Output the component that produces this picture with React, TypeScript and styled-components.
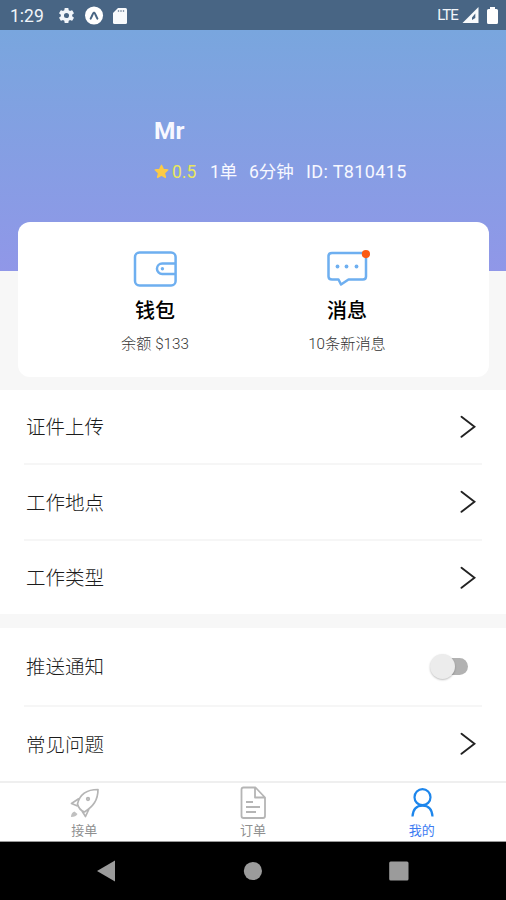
import React from 'react';
import styled, { createGlobalStyle } from 'styled-components';

const GlobalStyle = createGlobalStyle`
  * { box-sizing: border-box; }
  body {
    margin: 0;
    background: #f7f7f7;
    font-family: Roboto, "Noto Sans CJK SC", sans-serif;
    color: #1c1c1c;
  }
  svg { display: block; flex: none; }
`;

const Screen = styled.div`
  width: 506px;
  height: 900px;
  display: flex;
  flex-direction: column;
  overflow: hidden;
  background: #f7f7f7;
`;

const StatusBar = styled.header`
  flex: none;
  height: 30px;
  display: flex;
  align-items: center;
  justify-content: space-between;
  padding: 1px 8px 0 10px;
  background: #486584;
  color: #f1f5fa;
`;

const StatusGroup = styled.div<{ $gap: number }>`
  display: flex;
  align-items: center;
  gap: ${(p) => p.$gap}px;
`;

const Clock = styled.span`
  font-size: 17.5px;
  line-height: 20px;
  width: 38px;
`;

const Network = styled.span`
  font-size: 15px;
  line-height: 19px;
  padding-bottom: 1px;
  letter-spacing: -0.9px;
`;

const Hero = styled.section`
  flex: none;
  height: 241px;
  padding: 87px 0 0 154px;
  background: linear-gradient(#79a6de, #9097e8);
  color: #f7f8ff;
`;

const Name = styled.h1`
  margin: 0;
  font-size: 24.5px;
  line-height: 28px;
  font-weight: 700;
`;

const Stats = styled.div`
  display: flex;
  align-items: center;
  margin-top: 14px;
  height: 26px;
  font-size: 17.5px;
  line-height: 26px;
  white-space: nowrap;
`;

const Stat = styled.span<{ $width: number }>`
  width: ${(p) => p.$width}px;
`;

const DriverId = styled.span`
  font-size: 18px;
  letter-spacing: 0.38px;
`;

const Rating = styled.span`
  display: flex;
  align-items: center;
  gap: 3px;
  width: 56px;
  color: #e9e75c;
  svg { margin-bottom: 2px; }
`;

const Card = styled.section`
  flex: none;
  position: relative;
  display: flex;
  height: 155px;
  margin: -49px 17px 13px 18px;
  padding: 28px 41px 0;
  border-radius: 12px;
  background: #fff;
`;

const CardItem = styled.div`
  width: 192px;
  display: flex;
  flex-direction: column;
  align-items: center;
`;

const CardTitle = styled.div`
  margin-top: 9px;
  font-size: 20px;
  line-height: 28px;
  font-weight: 500;
  color: #000;
`;

const CardNote = styled.div`
  margin-top: 8px;
  font-size: 15.2px;
  line-height: 22px;
  font-weight: 300;
  color: #333;
`;

const List = styled.section<{ $height: number }>`
  flex: none;
  display: flex;
  flex-direction: column;
  height: ${(p) => p.$height}px;
  padding: 0 24px;
  background: #fff;
`;

const Row = styled.div<{ $height: number; $divider?: boolean }>`
  flex: none;
  display: flex;
  align-items: center;
  justify-content: space-between;
  height: ${(p) => p.$height}px;
  padding: 0 6px 0 2px;
  border-bottom: ${(p) => (p.$divider ? '2px solid #f6f6f6' : 'none')};
`;

const RowLabel = styled.span`
  padding-top: 3px;
  font-size: 19.5px;
  line-height: 28px;
  font-weight: 300;
`;

const Gap = styled.div`
  flex: none;
  height: 14px;
`;

const Track = styled.span`
  display: flex;
  align-items: center;
  width: 31px;
  height: 17px;
  margin-right: 8px;
  border-radius: 9px;
  background: #b2b2b2;
`;

const Thumb = styled.span`
  flex: none;
  width: 25px;
  height: 25px;
  margin-left: -7px;
  border-radius: 50%;
  background: #ececec;
  box-shadow: 0 1px 2px rgba(0, 0, 0, 0.25);
`;

const TabBar = styled.nav`
  flex: none;
  display: flex;
  height: 61px;
  border-top: 2px solid #efefef;
  border-bottom: 1px solid #999;
  background: #fff;
`;

const Tab = styled.div<{ $active?: boolean }>`
  flex: 1;
  display: flex;
  flex-direction: column;
  align-items: center;
  padding-top: 3px;
  color: ${(p) => (p.$active ? '#3d7cf2' : '#8f8f8f')};
  font-size: 13px;
  line-height: 18px;
  svg { margin-bottom: 2px; }
`;

const NavBar = styled.footer`
  flex: none;
  height: 58px;
  display: flex;
  justify-content: space-between;
  align-items: center;
  padding: 0 96px 0 97px;
  background: #000;
`;

const Gear = () => (
  <svg width="19" height="19" viewBox="0 0 24 24" fill="currentColor">
    <path d="M19.14 12.94c.04-.3.06-.61.06-.94s-.02-.64-.07-.94l2.03-1.58a.49.49 0 0 0 .12-.61l-1.92-3.32a.49.49 0 0 0-.59-.22l-2.39.96a7 7 0 0 0-1.62-.94l-.36-2.54a.48.48 0 0 0-.48-.41h-3.84a.48.48 0 0 0-.47.41l-.36 2.54c-.59.24-1.13.57-1.62.94l-2.39-.96a.48.48 0 0 0-.59.22L2.74 8.87a.48.48 0 0 0 .12.61l2.03 1.58a7.4 7.4 0 0 0 0 1.88l-2.03 1.58a.49.49 0 0 0-.12.61l1.92 3.32c.12.22.37.29.59.22l2.39-.96c.5.38 1.03.7 1.62.94l.36 2.54c.05.24.24.41.48.41h3.84c.24 0 .44-.17.47-.41l.36-2.54a7 7 0 0 0 1.62-.94l2.39.96c.22.08.47 0 .59-.22l1.92-3.32a.49.49 0 0 0-.12-.61zM12 15.2a3.2 3.2 0 1 1 0-6.4 3.2 3.2 0 0 1 0 6.4z" />
  </svg>
);

const ExpoBadge = () => (
  <svg width="19" height="19" viewBox="0 0 20 20">
    <circle cx="9.500" cy="10" r="9.500" fill="#fff" />
    <path d="M6 13.200C7.400 11 8.300 7 9.500 7s2.100 4 3.500 6.200" fill="none" stroke="#486584" strokeWidth="2.200" strokeLinecap="round" />
  </svg>
);

const SdCard = () => (
  <svg width="14" height="16" viewBox="0 0 14 16">
    <path d="M5 0h7.500Q14 0 14 1.500v13q0 1.500-1.500 1.500h-11Q0 16 0 14.500V5z" fill="#f8fafc" />
    <path d="M5.500 2v2M8 2v2M10.500 2v2" stroke="#8c9cad" strokeWidth="1.300" />
  </svg>
);

const Signal = () => (
  <svg width="17" height="17" viewBox="0 0 17 17">
    <path d="M16.500 0v16H.500z" fill="#f8fafc" />
    <path d="M13.300 6.500v4.500L10 13v-2.500z" fill="#486584" />
  </svg>
);

const Battery = () => (
  <svg width="11" height="17" viewBox="0 0 11 17">
    <path d="M3 0h5v2h1.500Q11 2 11 3.500v12q0 1.500-1.500 1.500h-8Q0 17 0 15.500v-12Q0 2 1.500 2H3z" fill="#fff" />
  </svg>
);

const Star = () => (
  <svg width="15" height="15" viewBox="0 0 24 24" fill="#fdcb45" stroke="#fdcb45" strokeWidth="2" strokeLinejoin="round">
    <path d="m12 2 3 6.600 7.200.8-5.400 4.900 1.500 7.200L12 17.900l-6.300 3.600 1.500-7.200L1.800 9.400 9 8.600z" />
  </svg>
);

const Wallet = () => (
  <svg width="44" height="38" viewBox="-0.700 0 44 38" fill="none" stroke="#6eaff0" strokeWidth="2.500">
    <rect x="1.300" y="2.500" width="40.600" height="33" rx="4.500" />
    <path d="M41.800 13.500H28.500a5.250 5.250 0 0 0 0 10.500h13.300" />
    <circle cx="28.700" cy="18.700" r="1.700" fill="#6eaff0" stroke="none" />
  </svg>
);

const Message = () => (
  <svg width="46" height="38" viewBox="-2 0 46 38">
    <path d="M6 3h31q3 0 3 3v20.500q0 3-3 3H22.500L15 34.500l-2.500-5H6q-3.500 0-3.500-3V6Q2.500 3 6 3z" fill="none" stroke="#6eaff0" strokeWidth="2.500" strokeLinejoin="round" />
    <g fill="#6eaff0">
      <circle cx="11.500" cy="16.500" r="1.900" />
      <circle cx="20.500" cy="16.500" r="1.900" />
      <circle cx="30.500" cy="16.500" r="1.900" />
    </g>
    <circle cx="39.900" cy="4.100" r="4.100" fill="#fb5b14" />
  </svg>
);

const Chevron = () => (
  <svg width="18" height="24" viewBox="0 0 18 24" fill="none" stroke="#222" strokeWidth="1.900" strokeLinecap="round">
    <path d="m3.500 1.800 13 10-13 10" />
  </svg>
);

const Rocket = () => (
  <svg width="32" height="34" viewBox="0 0 32 34" fill="none" stroke="#b5b5b5" strokeWidth="1.700" strokeLinejoin="round">
    <path d="M9.500 18C11.500 9 18 3.500 30 3.500 30 14.500 25 20.500 16.500 26q-5.500-2-7-8zM11 12.500 3.500 17.500l6 2.500M14 25l3.500 5.500L21 23" />
    <circle cx="20" cy="13" r="1.300" />
    <path d="M6.500 25.500q-3.500 1-3.500 5.500 5 0 6.500-3z" fill="#c0c0c0" stroke="none" />
  </svg>
);

const Document = () => (
  <svg width="32" height="34" viewBox="0 0 32 34" fill="none" stroke="#b5b5b5" strokeWidth="1.800" strokeLinejoin="round">
    <path d="M6.500 1.500h12L28 11.500V30q0 2-2 2H6.500q-2 0-2-2V3.500q0-2 2-2zM18 1.500v10h10M9 16h7M9 21h14M9 26h10" />
  </svg>
);

const Person = () => (
  <svg width="32" height="34" viewBox="0 0 32 34" fill="none" stroke="#1d86ec" strokeWidth="2.200">
    <circle cx="16.500" cy="11.200" r="8" />
    <path d="M6.500 30.500C7 23 11 19.700 16.500 19.700S26 23 26.500 30.500" />
  </svg>
);

const BackKey = () => (
  <svg width="19" height="22" viewBox="0 0 19 22">
    <path d="M18 .5v21L0 11z" fill="#9b9b9b" />
  </svg>
);

const HomeKey = () => (
  <svg width="20" height="20" viewBox="0 0 20 20">
    <circle cx="10.900" cy="10" r="9.100" fill="#9b9b9b" />
  </svg>
);

const RecentsKey = () => (
  <svg width="22" height="20" viewBox="0 0 22 20">
    <rect x="1.200" y=".5" width="19.300" height="19" rx="1.500" fill="#9b9b9b" />
  </svg>
);

const LinkRow = ({ label, height, divider }: { label: string; height: number; divider?: boolean }) => (
  <Row $height={height} $divider={divider}>
    <RowLabel>{label}</RowLabel>
    <Chevron />
  </Row>
);

export default function App() {
  return (
    <Screen>
      <GlobalStyle />
      <StatusBar>
        <StatusGroup $gap={9}>
          <Clock>1:29</Clock>
          <Gear />
          <ExpoBadge />
          <SdCard />
        </StatusGroup>
        <StatusGroup $gap={4}>
          <Network>LTE</Network>
          <Signal />
          <span />
          <Battery />
        </StatusGroup>
      </StatusBar>
      <Hero>
        <Name>Mr</Name>
        <Stats>
          <Rating><Star />0.5</Rating>
          <Stat $width={39}>1单</Stat>
          <Stat $width={57}>6分钟</Stat>
          <DriverId>ID: T810415</DriverId>
        </Stats>
      </Hero>
      <Card>
        <CardItem>
          <Wallet />
          <CardTitle>钱包</CardTitle>
          <CardNote>余额 $133</CardNote>
        </CardItem>
        <CardItem>
          <Message />
          <CardTitle>消息</CardTitle>
          <CardNote>10条新消息</CardNote>
        </CardItem>
      </Card>
      <List $height={224}>
        <LinkRow label="证件上传" height={75} divider />
        <LinkRow label="工作地点" height={76} divider />
        <LinkRow label="工作类型" height={73} />
      </List>
      <Gap />
      <List $height={153}>
        <Row $height={79} $divider>
          <RowLabel>推送通知</RowLabel>
          <Track><Thumb /></Track>
        </Row>
        <LinkRow label="常见问题" height={74} />
      </List>
      <TabBar>
        <Tab><Rocket />接单</Tab>
        <Tab><Document />订单</Tab>
        <Tab $active><Person />我的</Tab>
      </TabBar>
      <NavBar>
        <BackKey />
        <HomeKey />
        <RecentsKey />
      </NavBar>
    </Screen>
  );
}
